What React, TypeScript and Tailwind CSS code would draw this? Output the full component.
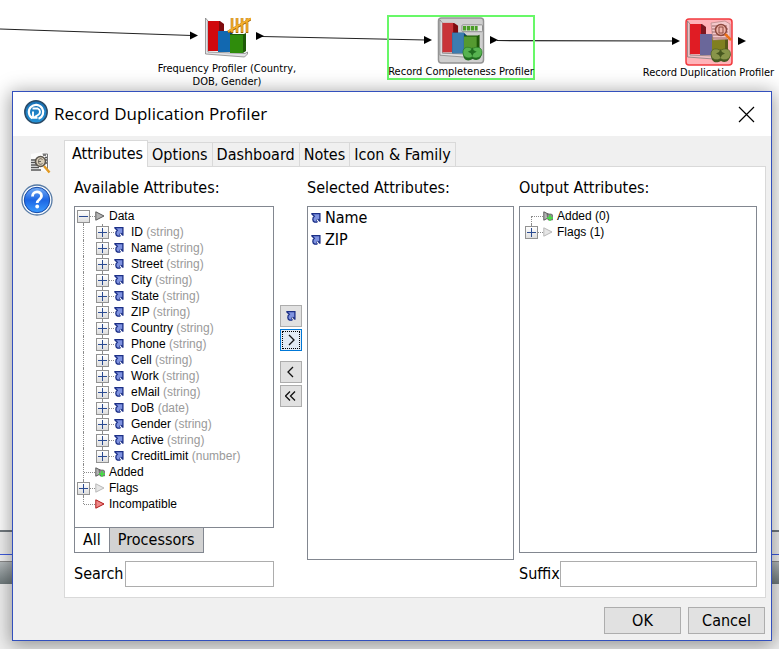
import { useState } from "react";
import type { ReactNode } from "react";

const fields: [string, string][] = [
  ["ID", "string"],
  ["Name", "string"],
  ["Street", "string"],
  ["City", "string"],
  ["State", "string"],
  ["ZIP", "string"],
  ["Country", "string"],
  ["Phone", "string"],
  ["Cell", "string"],
  ["Work", "string"],
  ["eMail", "string"],
  ["DoB", "date"],
  ["Gender", "string"],
  ["Active", "string"],
  ["CreditLimit", "number"],
];

const tabs = ["Attributes", "Options", "Dashboard", "Notes", "Icon & Family"];

function AttributeIcon() {
  return (
    <svg width="10" height="10" viewBox="0 0 10 10" className="shrink-0" aria-hidden="true">
      <path d="M.6.6h8.300v7.400L7.300 6.300C5.500 6.300 4.600 7 5 7.700c.3.500 1.600.2 1.600.9C6.600 9.400 5 9.700 3.600 9.100 1.600 8.200 1.200 5.200 3.300 3.100Z" fill="#7f93e0" />
      <path d="M.3.700h8.600v8M.8 1l2.500 2.200C1 5.200 1.600 8.200 3.600 9.200h2.800M8.600 8 7 6.300" fill="none" stroke="#1b2f86" strokeWidth="1.300" />
      <path d="M6.600 6.300 5 7.300l1.600 1.300" fill="none" stroke="#1b2f86" strokeWidth=".8" />
    </svg>
  );
}

function Triangle({ kind }: { kind: "data" | "added" | "flags" | "bad" }) {
  const fill = kind === "bad" ? "#f08a8a" : kind === "flags" ? "#e6e6e6" : "#b4b4b4";
  const stroke = kind === "bad" ? "#b01818" : kind === "flags" ? "#b8b8b8" : "#5a5a5a";
  return (
    <svg width="10" height="10" viewBox="0 0 10 10" className="shrink-0" aria-hidden="true">
      <path d="M.8.800 9 5 .8 9.200Z" fill={fill} stroke={stroke} />
      {kind === "added" && (
        <>
          <path d="M4 3h4.500l1 1v5H5Z" fill="#8d8d8d" stroke="#4c4c4c" strokeWidth=".6" />
          <path d="M7 4v6M4 7h6" stroke="#3fe63f" strokeWidth="1.400" />
        </>
      )}
    </svg>
  );
}

type RowProps = {
  label: string;
  icon: ReactNode;
  type?: string;
  child?: boolean;
  open?: boolean;
  leaf?: boolean;
  rail?: "full" | "top" | "bottom";
};

function Rail({ rail }: { rail: "full" | "top" | "bottom" }) {
  const span = rail === "full" ? "inset-y-0" : rail === "top" ? "top-0 h-2" : "bottom-0 h-2";
  return <span className={`absolute left-[6px] border-l border-dotted border-[#8c8c8c] ${span}`} />;
}

function TreeRow({ label, icon, type, child, open, leaf, rail = "full" }: RowProps) {
  return (
    <li className="flex h-4 items-center text-[12px] leading-4">
      {child && (
        <span className="relative h-4 w-[19px] shrink-0">
          <Rail rail="full" />
        </span>
      )}
      <span className="relative flex h-4 w-[18px] shrink-0 items-center">
        <Rail rail={rail} />
        {leaf ? (
          <span className="ml-[7px] flex-1 border-t border-dotted border-[#8c8c8c]" />
        ) : (
          <>
            <button
              type="button"
              aria-label={`Toggle ${label}`}
              className="relative flex size-[13px] items-center justify-center border border-[#929292] bg-linear-to-b from-white to-[#dedede]"
            >
              <span className="h-px w-[9px] bg-[#2b4b92]" />
              {!open && <span className="absolute h-[9px] w-px bg-[#2b4b92]" />}
            </button>
            <span className="flex-1 border-t border-dotted border-[#8c8c8c]" />
          </>
        )}
      </span>
      {icon}
      <span className={child ? "ml-[7px]" : "ml-1"}>
        {label}
        {type && <span className="text-[#9a9a9a]"> ({type})</span>}
      </span>
    </li>
  );
}

function Bars({ muted, rose }: { muted?: boolean; rose?: boolean }) {
  const red = rose ? "#e01c24" : muted ? "#c93338" : "#d0090d";
  const blue = rose ? "#6a679a" : muted ? "#3c7cb0" : "#1268b0";
  const green = rose ? "#808020" : muted ? "#559a30" : "#2f8c0c";
  return (
    <>
      <path d="M2.500 3 5 6v31l37 1.500 2.500-1.500v2l-3 3-39-3Z" fill={rose ? "#eec0c4" : "#e2e2e6"} stroke="#777" strokeWidth=".7" />
      <path d="M6 6h11l4 3v26H6Z" fill={rose ? "#7c1820" : "#7f0b0e"} />
      <path d="M5 6h11v30H5Z" fill={red} />
      <path d="M15 16h12l3 3v18H15Z" fill={rose ? "#464578" : "#0b437e"} />
      <path d="M15 16h12v21H15Z" fill={blue} />
      <path d="M27 19h14l2-1v18l-3 2H27Z" fill={rose ? "#59591a" : "#1e5a08"} />
      <path d="M27 20h13v18H27Z" fill={green} />
    </>
  );
}

function Apple({ fill, dark }: { fill: string; dark: string }) {
  return (
    <>
      <path d="M26 36c0 10 6 9 10 7 4 2 9 1 9.500-7Z" fill={dark} />
      <path d="M26 36c0-6 6-6 9.500-3.500C39 30 45.500 30 45.500 36c0 6-7 7-10 4.500C32 43 26 42 26 36Z" fill={fill} stroke={dark} strokeWidth=".6" />
      <path d="m35.500 31 1.500 3 3 1.500-3 1.500-1.500 3-1.500-3-3-1.500 3-1.500Z" fill={dark} />
    </>
  );
}

function FrequencyIcon() {
  return (
    <svg width="48" height="44" viewBox="0 0 48 44" aria-hidden="true">
      <Bars />
      <path d="M29 3v15M34 3v15M39 3v15M44 3v15M25 17 48 4" stroke="#a56405" strokeWidth="2.600" />
      <path d="M29 3v14M34 3v14M39 3v14M44 3v14M25 16.500 48 3.500" stroke="#f5b02c" strokeWidth="1.600" />
    </svg>
  );
}

function CompletenessIcon() {
  return (
    <svg width="48" height="48" viewBox="0 0 48 48" aria-hidden="true">
      <rect x="1" y="1" width="46" height="46" rx="3" fill="#cfcfcf" stroke="#949494" strokeWidth="1.500" />
      <Bars muted />
      <rect x="25" y="8" width="21" height="7" rx="1" fill="#e8e8e8" stroke="#8b8b8b" />
      <path d="M26 11.500h15" stroke="#4a9d27" strokeWidth="4.500" strokeDasharray="3.300 .700" />
      <Apple fill="#57b350" dark="#216e20" />
    </svg>
  );
}

function DuplicationIcon() {
  return (
    <svg width="48" height="48" viewBox="0 0 48 48" aria-hidden="true">
      <rect x="1" y="1" width="46" height="46" rx="3" fill="#ffb3b8" stroke="#f23a3e" strokeWidth="1.500" />
      <Bars rose />
      <path d="m26 5 14-2 5 3v15l-17 1Z" fill="#f4c9cb" stroke="#a87a7a" strokeWidth=".6" />
      <path d="M27 8h15M27 11h16M27 14h16M28 17h15M28 20h14" stroke="#8c5050" strokeWidth=".8" />
      <circle cx="36" cy="12" r="5.500" fill="#efb4aa" stroke="#8d4a40" strokeWidth="1.500" />
      <path d="M34 9h4v6h-4Z" fill="none" stroke="#8d4a40" />
      <path d="m40 16 6 6" stroke="#ec7018" strokeWidth="2.500" />
      <Apple fill="#88954a" dark="#475820" />
    </svg>
  );
}

function Canvas() {
  return (
    <div className="absolute inset-0 flex flex-col overflow-hidden">
      <div className="h-[532px] shrink-0 border-b-2 border-[#737b80] bg-white">
        <svg width="779" height="90" viewBox="0 0 779 90" className="absolute top-0 left-0" aria-hidden="true">
          <path d="M0 29 192 35.500M262 36.500 426 40M497 40.500 674 41" stroke="#222" strokeWidth="1.200" fill="none" />
          <path d="m190 31.500 8 4-8 4ZM256 32l8 4-8 4ZM424 36l8 4-8 4ZM490 36l8 4-8 4ZM672 37l8 4-8 4ZM738 37l8 4-8 4Z" fill="#000" />
        </svg>
        <figure className="absolute top-[15px] left-[152px] flex w-[150px] flex-col items-center">
          <FrequencyIcon />
          <figcaption className="mt-[3px] text-center text-[11px] leading-[13px]">
            Frequency Profiler (Country,
            <br />
            DOB, Gender)
          </figcaption>
        </figure>
        <figure className="absolute top-[15px] left-[387px] flex h-[65px] w-[148px] flex-col items-center border-2 border-[#68f868]">
          <CompletenessIcon />
          <figcaption className="mt-px text-[11px] leading-[13px] whitespace-nowrap">Record Completeness Profiler</figcaption>
        </figure>
        <figure className="absolute top-[18px] left-[640px] flex w-[137px] flex-col items-center">
          <DuplicationIcon />
          <figcaption className="text-[11px] leading-[13px] whitespace-nowrap">Record Duplication Profiler</figcaption>
        </figure>
      </div>
      <div className="h-[23px] shrink-0 border-b border-[#3f5ce0] bg-[#f0f0f0]" />
      <div className="h-[7px] shrink-0 border-b border-[#8a8a8a] bg-[#f4f4f4]" />
      <div className="h-[22px] shrink-0 bg-linear-to-b from-[#b6bcbe] to-[#707b7d]" />
      <div className="flex-1 bg-[#f0f0f0]" />
    </div>
  );
}

function MoveButton({ label, active, children }: { label: string; active?: boolean; children: ReactNode }) {
  return (
    <button
      type="button"
      aria-label={label}
      className={`flex size-[22px] items-center justify-center border ${
        active ? "border-[#0078d7] bg-[#e2ebf5] p-px" : "border-[#adadad] bg-[#e1e1e1]"
      }`}
    >
      {active ? (
        <span className="flex size-full items-center justify-center border border-dotted border-black">{children}</span>
      ) : (
        children
      )}
    </button>
  );
}

function Chevron({ d }: { d: string }) {
  return (
    <svg width="12" height="12" viewBox="0 0 12 12" fill="none" stroke="#111" strokeWidth="1.300" aria-hidden="true">
      <path d={d} />
    </svg>
  );
}

export default function App() {
  const [tab, setTab] = useState("Attributes");
  return (
    <div className="relative min-h-screen overflow-hidden bg-white pt-[91px] pr-[7px] pb-2 pl-3 font-['DejaVu_Sans_Condensed','DejaVu_Sans',sans-serif] text-[16px] leading-5 text-black">
      <Canvas />
      <section
        role="dialog"
        aria-label="Record Duplication Profiler"
        className="relative border border-[#3350bd] bg-[#f0f0f0] shadow-[0_3px_18px_2px_rgba(0,0,0,0.38)]"
      >
        <header className="flex h-11 items-center bg-white pr-4 pl-[11px]">
          <svg width="24" height="24" viewBox="0 0 24 24" fill="none" className="-mt-1" aria-hidden="true">
            <defs>
              <linearGradient id="brand" x1="0" y1="0" x2="0" y2="1">
                <stop stopColor="#1a70b4" />
                <stop offset="1" stopColor="#2492d6" />
              </linearGradient>
            </defs>
            <circle cx="12" cy="12" r="11.200" fill="url(#brand)" stroke="#2b4a66" strokeWidth="1.500" />
            <path d="M8.300 18.200A7.200 7.200 0 1 1 14.500 18.800" stroke="#fff" strokeWidth="2.200" />
            <path d="M8.500 8.500h5.200c3 1.300 3 5 .3 6.500l-3.500 2M9 11.500v6.300h4.500" stroke="#fff" strokeWidth="1.900" />
          </svg>
          <h1 className="ml-[6px] flex-1 font-['Open_Sans',sans-serif] text-[17px] leading-6">Record Duplication Profiler</h1>
          <button type="button" aria-label="Close">
            <svg width="17" height="17" viewBox="0 0 17 17" stroke="#000" strokeWidth="1.200" aria-hidden="true">
              <path d="m1 1 15 15M16 1 1 16" />
            </svg>
          </button>
        </header>

        <div className="flex">
          <aside className="flex w-[51px] shrink-0 flex-col items-start pt-4 pl-2">
            <button type="button" aria-label="Preview" className="ml-2">
              <svg width="22" height="22" viewBox="0 0 22 22" fill="none" aria-hidden="true">
                <path d="M2 2 14 0l6 3v18l-6-2H2Z" fill="#fbfbfb" />
                <path d="M2 8h6M2 10.500h6M2 13h6M2 15.500h8M2 18h10M14 3h3M16 5.500h3M16 8h3M17 11h2" stroke="#555" strokeWidth="1.400" />
                <path d="M13.500 2h5v16" stroke="#777" />
                <circle cx="11.500" cy="9.500" r="5" fill="#d9ceb8" stroke="#5b564e" strokeWidth="1.600" />
                <path d="M13.500 7.500c-3-2-4 0-4 2s1 4 4 2M9 9.500h3" stroke="#66615a" />
                <path d="m15 14 5.500 6.500" stroke="#e29a24" strokeWidth="2.500" />
              </svg>
            </button>
            <button type="button" aria-label="Help" className="mt-[10px]">
              <svg width="32" height="32" viewBox="0 0 32 32" fill="none" aria-hidden="true">
                <defs>
                  <linearGradient id="help" x1="0" y1="0" x2="0" y2="1">
                    <stop stopColor="#76adf5" />
                    <stop offset=".5" stopColor="#1c66e4" />
                    <stop offset="1" stopColor="#3d9dff" />
                  </linearGradient>
                </defs>
                <circle cx="16" cy="16" r="15" fill="#f8fbff" stroke="#567aa5" strokeWidth="1.300" />
                <circle cx="16" cy="16" r="12.700" fill="url(#help)" stroke="#174aa6" />
                <path d="M11.500 12.500c0-6 9-6 9-.5 0 3.500-4.300 3.500-4.300 7" stroke="#fff" strokeWidth="2.800" />
                <circle cx="16.200" cy="22.500" r="1.900" fill="#fff" />
              </svg>
            </button>
          </aside>

          <main className="mr-[5px] min-w-0 flex-1 pt-1">
            <div role="tablist" className="flex items-end">
              {tabs.map((t) => (
                <button
                  key={t}
                  type="button"
                  role="tab"
                  aria-selected={t === tab}
                  onClick={() => setTab(t)}
                  className={
                    t === tab
                      ? "relative -mb-px h-[27px] border border-b-0 border-[#d9d9d9] bg-white pr-1 pb-px pl-[7px]"
                      : "h-[24px] border-t border-r border-[#d9d9d9] bg-[#f0f0f0] px-1"
                  }
                >
                  {t}
                </button>
              ))}
            </div>
            <div className="border border-[#d9d9d9] bg-white pt-[11px] pr-2 pb-[10px] pl-[9px]">
              <div className="grid grid-cols-[200fr_33px_207fr_5px_238fr]">
                <div className="flex min-w-0 flex-col">
                  <h2>Available Attributes:</h2>
                  <ul className="mt-[8px] h-[322px] border border-[#828790] pt-px pl-[2px] font-['Liberation_Sans',Arial,sans-serif]">
                    <TreeRow label="Data" open rail="bottom" icon={<Triangle kind="data" />} />
                    {fields.map(([name, type], i) => (
                      <TreeRow
                        key={name}
                        child
                        label={name}
                        type={type}
                        rail={i === fields.length - 1 ? "top" : "full"}
                        icon={<AttributeIcon />}
                      />
                    ))}
                    <TreeRow leaf label="Added" icon={<Triangle kind="added" />} />
                    <TreeRow label="Flags" icon={<Triangle kind="flags" />} />
                    <TreeRow leaf rail="top" label="Incompatible" icon={<Triangle kind="bad" />} />
                  </ul>
                  <div className="flex">
                    <button type="button" className="h-[25px] border border-t-0 border-[#828790] bg-white px-2">
                      All
                    </button>
                    <button type="button" className="h-[25px] border border-t-0 border-l-0 border-[#828790] bg-[#d2d2d2] px-2">
                      Processors
                    </button>
                  </div>
                  <div className="mt-2 flex items-center gap-[2px]">
                    <label htmlFor="search">Search</label>
                    <input id="search" className="h-[26px] min-w-0 flex-1 border border-[#adadad] bg-white px-1" />
                  </div>
                </div>

                <div className="flex flex-col items-center gap-[2px] pt-[127px]">
                  <MoveButton label="Add attribute">
                    <AttributeIcon />
                  </MoveButton>
                  <MoveButton label="Select" active>
                    <Chevron d="m4 1 5 5-5 5" />
                  </MoveButton>
                  <span className="h-[6px]" />
                  <MoveButton label="Remove">
                    <Chevron d="M8 1 3 6l5 5" />
                  </MoveButton>
                  <MoveButton label="Remove all">
                    <Chevron d="M5 1.500.500 6 5 10.500M10 1.500 5.500 6l4.500 4.500" />
                  </MoveButton>
                </div>

                <div className="flex min-w-0 flex-col pb-[27px]">
                  <h2>Selected Attributes:</h2>
                  <ul className="mt-[8px] flex-1 border border-[#828790] pl-[3px]">
                    {["Name", "ZIP"].map((name) => (
                      <li key={name} className="flex h-[22px] items-center gap-1">
                        <AttributeIcon />
                        {name}
                      </li>
                    ))}
                  </ul>
                </div>

                <span />

                <div className="flex min-w-0 flex-col">
                  <h2>Output Attributes:</h2>
                  <ul className="mt-[8px] flex-1 border border-[#828790] pt-px pl-[5px] font-['Liberation_Sans',Arial,sans-serif]">
                    <TreeRow leaf rail="bottom" label="Added (0)" icon={<Triangle kind="added" />} />
                    <TreeRow rail="top" label="Flags (1)" icon={<Triangle kind="flags" />} />
                  </ul>
                  <div className="mt-2 flex items-center">
                    <label htmlFor="suffix">Suffix</label>
                    <input id="suffix" className="h-[26px] min-w-0 flex-1 border border-[#adadad] bg-white px-1" />
                  </div>
                </div>
              </div>
            </div>
          </main>
        </div>

        <footer className="flex justify-end gap-[7px] pt-[9px] pr-[6px] pb-[6px]">
          <button type="button" className="h-[27px] w-[77px] border border-[#adadad] bg-[#e1e1e1]">
            OK
          </button>
          <button type="button" className="h-[27px] w-[77px] border border-[#adadad] bg-[#e1e1e1]">
            Cancel
          </button>
        </footer>
      </section>
    </div>
  );
}
